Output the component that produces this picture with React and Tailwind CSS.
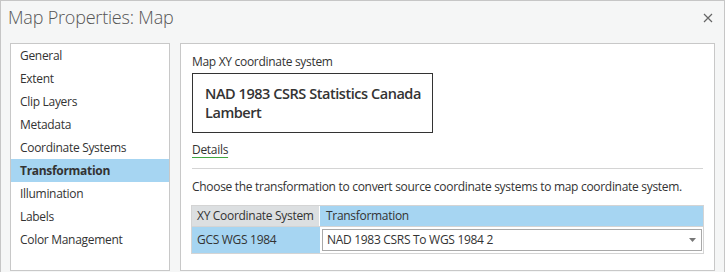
import React from 'react';

const items = [
  'General',
  'Extent',
  'Clip Layers',
  'Metadata',
  'Coordinate Systems',
  'Transformation',
  'Illumination',
  'Labels',
  'Color Management',
];

const App = () => {
  return (
    <div
      className="w-[725px] h-[272px] overflow-hidden bg-[#f5f6f6] border-t border-l border-r border-[#c6c6c6] text-[#333] tracking-[-0.3px]"
      style={{ fontFamily: '"Open Sans", "Noto Sans", sans-serif' }}
    >
      <div className="h-[42px] flex items-start justify-between pl-[7px] pr-[11px] pt-[4px]">
        <h1 className="text-[18px] font-light text-[#555] leading-[24px] tracking-[-0.2px]">Map Properties: Map</h1>
        <svg width="10" height="10" viewBox="0 0 10 10" className="mt-[8px]">
          <path d="M1 1 L9 9 M9 1 L1 9" stroke="#666" strokeWidth="1.2" />
        </svg>
      </div>

      <div className="flex pl-[9px] gap-[10px]">
        <ul className="w-[160px] h-[228px] bg-white border border-[#c8c8c8] text-[12px]">
          {items.map((item) => (
            <li
              key={item}
              className={
                item === 'Transformation'
                  ? 'h-[23px] flex items-center pl-[9px] bg-[#a6d5f2] font-bold text-[#333]'
                  : 'h-[23px] flex items-center pl-[9px]'
              }
            >
              {item}
            </li>
          ))}
        </ul>

        <div className="w-[535px] h-[228px] bg-white border border-[#c8c8c8] pl-[11px] pt-[10px] text-[12px]">
          <p className="leading-[16px]">Map XY coordinate system</p>
          <div className="mt-[3px] w-[241px] h-[60px] border border-[#333] pl-[12px] pt-[10px]">
            <p className="text-[14.5px] font-semibold leading-[19px] tracking-[-0.45px] whitespace-nowrap text-[#333]">
              NAD 1983 CSRS Statistics Canada
              <br />
              Lambert
            </p>
          </div>
          <a className="block mt-[9px] w-fit leading-[16px] underline decoration-[#3fa640] underline-offset-[3px]">
            Details
          </a>
          <div className="mt-[10px] w-[511px] h-px bg-[#d4d4d4]" />
          <p className="mt-[10px] leading-[16px] whitespace-nowrap">
            Choose the transformation to convert source coordinate systems to map coordinate system.
          </p>

          <div className="mt-[10px] -ml-px w-[513px] border border-[#d4d4d4] whitespace-nowrap">
            <div className="grid grid-cols-[128px_1fr] h-[21px] border-b border-[#d4d4d4]">
              <div className="bg-[#dcdfe1] flex items-center pl-[5px] border-r border-white">XY Coordinate System</div>
              <div className="bg-[#a6d5f2] flex items-center pl-[6px]">Transformation</div>
            </div>
            <div className="grid grid-cols-[128px_1fr] h-[26px]">
              <div className="bg-[#a6d5f2] flex items-center pl-[5px]">GCS WGS 1984</div>
              <div className="bg-white p-[2px] pr-[1px]">
                <div className="h-full border border-[#a9a9a9] flex items-center justify-between pl-[4px] pr-[5px]">
                  <span>NAD 1983 CSRS To WGS 1984 2</span>
                  <svg width="7" height="4" viewBox="0 0 7 4">
                    <path d="M0 0 H7 L3.5 4 Z" fill="#777" />
                  </svg>
                </div>
              </div>
            </div>
          </div>
        </div>
      </div>
    </div>
  );
};

export default App;
